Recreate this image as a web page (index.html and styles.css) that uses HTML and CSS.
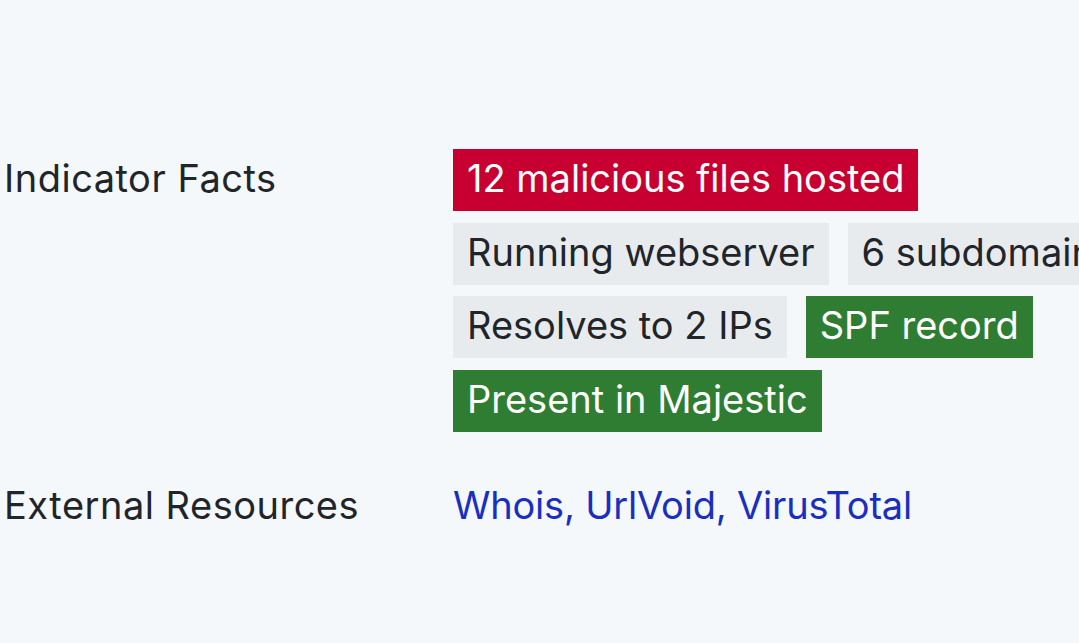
FILE: index.html
```html
<!DOCTYPE html>
<html>
<head>
<meta charset="utf-8">
<link rel="stylesheet" href="styles.css">
</head>
<body>
<main class="facts">
  <div class="row">
    <div class="label">Indicator Facts</div>
    <div class="value badges">
      <span class="badge bad">12 malicious files hosted</span>
      <span class="badge">Running webserver</span>
      <span class="badge">6 subdomains</span>
      <span class="badge">Resolves to 2 IPs</span>
      <span class="badge good">SPF record</span>
      <span class="badge good">Present in Majestic</span>
    </div>
  </div>
  <div class="row">
    <div class="label">External Resources</div>
    <div class="value links"><a href="#">Whois</a>, <a href="#">UrlVoid</a>, <a href="#">VirusTotal</a></div>
  </div>
</main>
</body>
</html>
```
FILE: styles.css
```css
html, body {
  margin: 0;
  padding: 0;
  background: #f5f8fa;
  overflow: hidden;
}
body {
  font-family: Inter, "Noto Sans", sans-serif;
  font-size: 38px;
  color: #212529;
}
.facts {
  display: flex;
  flex-direction: column;
  gap: 44px;
  padding: 149px 0 0 4px;
  width: 1160px;
}
.row {
  display: grid;
  grid-template-columns: 449px 1fr;
  align-items: start;
}
.label {
  line-height: 58px;
  padding-bottom: 4px;
  letter-spacing: 0.5px;
}
.badges {
  display: flex;
  flex-wrap: wrap;
  gap: 11.5px 19px;
}
.badge {
  display: inline-block;
  white-space: nowrap;
  background: #e8ebee;
  padding: 0 14px 4px;
  line-height: 58px;
}
.badge.bad {
  background: #c80032;
  color: #fff;
}
.badge.good {
  background: #2e7d32;
  color: #fff;
}
.links {
  line-height: 58px;
  padding-bottom: 4px;
  letter-spacing: -0.2px;
  color: #1a2fbf;
}
.links a {
  color: #1a2fbf;
  text-decoration: none;
}
```
